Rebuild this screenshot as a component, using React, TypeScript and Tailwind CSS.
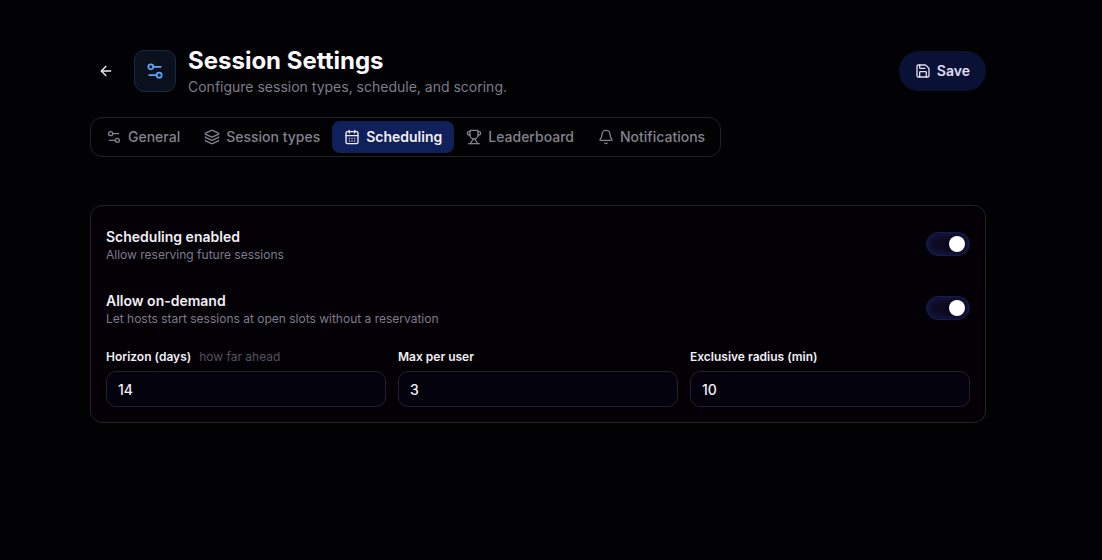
import { useState } from "react"
import type { ReactNode } from "react"
import { ArrowLeft, Bell, CalendarDays, Layers, Save, Settings2, Trophy } from "lucide-react"
import clsx from "clsx"

const TABS = [
    { id: "general", label: "General", icon: Settings2 },
    { id: "types", label: "Session types", icon: Layers },
    { id: "scheduling", label: "Scheduling", icon: CalendarDays },
    { id: "leaderboard", label: "Leaderboard", icon: Trophy },
    { id: "notifications", label: "Notifications", icon: Bell },
]

type ToggleRowProps = {
    id: string
    title: string
    description: string
}

function ToggleRow({ id, title, description }: ToggleRowProps) {
    const [on, setOn] = useState(true)

    return (
        <div className="flex items-center justify-between gap-4 py-[13px]">
            <div className="pt-0.5">
                <label htmlFor={id} className="block text-sm font-semibold text-[#f1eff5]">{title}</label>
                <p className="text-xs text-[#7f7b8b]">{description}</p>
            </div>
            <input
                id={id}
                type="checkbox"
                role="switch"
                checked={on}
                onChange={(e) => setOn(e.target.checked)}
                className="flex h-6 w-11 shrink-0 cursor-pointer appearance-none items-center rounded-full border border-[#1a1a4e] bg-[#0d0a22] px-1 shadow-[inset_0_0_8px_#1e2358] before:size-4 before:rounded-full before:bg-white before:shadow-[0_0_4px_#05040f] checked:before:ml-auto"
            />
        </div>
    )
}

type NumberFieldProps = {
    id: string
    label: string
    value: number
    hint?: ReactNode
}

function NumberField({ id, label, value, hint }: NumberFieldProps) {
    return (
        <div className="flex flex-col gap-1.5">
            <div className="flex items-center gap-2 text-xs">
                <label htmlFor={id} className="font-semibold text-[#f1eff5]">{label}</label>
                {hint && <span className="text-[#55525d]">{hint}</span>}
            </div>
            <input
                id={id}
                type="text"
                inputMode="numeric"
                defaultValue={value}
                className="h-9 w-full rounded-[10px] border border-[#232129] bg-[#04020d] px-[11px] text-sm font-medium text-[#f1eff5] outline-none focus:border-[#3b3a66]"
            />
        </div>
    )
}

export default function App() {
    const [tab, setTab] = useState("scheduling")

    return (
        <div className="min-h-screen bg-[#020204] pr-[26px] font-['Inter',sans-serif]">
            <main className="mx-auto max-w-4xl pt-[45px]">
                <header className="flex items-center justify-between">
                    <div className="flex items-center gap-3">
                        <button type="button" aria-label="Back" className="flex size-8 items-center justify-center text-[#f1eff5]">
                            <ArrowLeft className="size-4" />
                        </button>
                        <span className="flex size-[42px] items-center justify-center rounded-[10px] border border-[#172a45] bg-[#0a101c] text-[#60a5fa]">
                            <Settings2 className="size-5" />
                        </span>
                        <div>
                            <h1 className="text-2xl font-bold text-[#faf9fc]">Session Settings</h1>
                            <p className="text-sm text-[#7f7b8b]">Configure session types, schedule, and scoring.</p>
                        </div>
                    </div>
                    <button type="button" className="flex h-10 items-center gap-1.5 rounded-full bg-[#091235] px-4 text-sm font-semibold text-[#e2dcf5]">
                        <Save className="size-4" />
                        Save
                    </button>
                </header>

                <nav className="mt-5 flex w-fit rounded-xl border border-[#232326] p-[3px]" role="tablist">
                    {TABS.map(({ id, label, icon: Icon }) => (
                        <button
                            key={id}
                            type="button"
                            role="tab"
                            aria-selected={tab === id}
                            onClick={() => setTab(id)}
                            className={clsx(
                                "flex h-8 items-center gap-1.5 rounded-lg px-3 text-sm",
                                tab === id ? "bg-[#10205a] font-semibold text-[#f1eff5]" : "font-medium text-[#85818f]",
                            )}
                        >
                            <Icon className="size-4" />
                            {label}
                        </button>
                    ))}
                </nav>

                <section className="mt-12 rounded-xl border border-[#232326] bg-[#030106] px-[15px] pt-1.5 pb-[15px]">
                    <ToggleRow id="scheduling-enabled" title="Scheduling enabled" description="Allow reserving future sessions" />
                    <ToggleRow id="allow-on-demand" title="Allow on-demand" description="Let hosts start sessions at open slots without a reservation" />
                    <div className="mt-[9px] grid grid-cols-3 gap-3">
                        <NumberField id="horizon" label="Horizon (days)" value={14} hint="how far ahead" />
                        <NumberField id="max-per-user" label="Max per user" value={3} />
                        <NumberField id="radius" label="Exclusive radius (min)" value={10} />
                    </div>
                </section>
            </main>
        </div>
    )
}
